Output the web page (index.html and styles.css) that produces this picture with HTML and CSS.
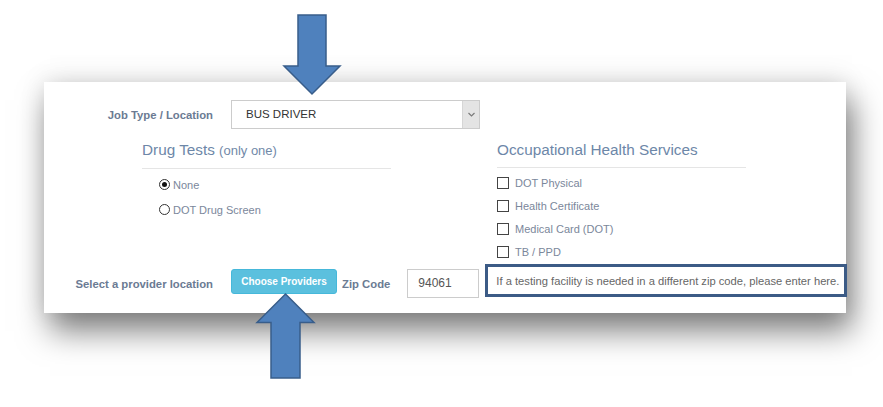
FILE: index.html
```html
<!DOCTYPE html>
<html lang="en">
<head>
<meta charset="utf-8">
<title>Job Type / Location</title>
<link rel="stylesheet" href="styles.css">
</head>
<body>
<div class="stage">
  <div class="panel">
    <div class="job-row">
      <label class="field-label">Job Type / Location</label>
      <div class="select">
        <span class="select-value">BUS DRIVER</span>
        <span class="select-arrow"><svg width="7" height="5" viewBox="0 0 7 5"><path d="M0.5 1 L3.5 4 L6.5 1" fill="none" stroke="#7a7a7a" stroke-width="1.2"/></svg></span>
      </div>
    </div>
    <div class="columns">
      <section class="group drug">
        <h3 class="group-title">Drug Tests <small>(only one)</small></h3>
        <ul class="options radios">
          <li><span class="radio checked"></span>None</li>
          <li><span class="radio"></span>DOT Drug Screen</li>
        </ul>
      </section>
      <section class="group ohs">
        <h3 class="group-title">Occupational Health Services</h3>
        <ul class="options checks">
          <li><span class="check"></span>DOT Physical</li>
          <li><span class="check"></span>Health Certificate</li>
          <li><span class="check"></span>Medical Card (DOT)</li>
          <li><span class="check"></span>TB / PPD</li>
        </ul>
      </section>
    </div>
    <div class="provider-row">
      <label class="field-label provider-label">Select a provider location</label>
      <button class="btn-info">Choose Providers</button>
      <span class="zip-label">Zip Code</span>
      <div class="zip-input">94061</div>
      <div class="callout">If a testing facility is needed in a different zip code, please enter here.</div>
    </div>
  </div>
  <svg class="annotations" width="883" height="407" viewBox="0 0 883 407">
    <polygon points="298,15 326,15 326,66 340,66 312,94 284,66 298,66" fill="#4f81bd" stroke="#385d8a" stroke-width="1.5"/>
    <polygon points="285.5,294 314,322.5 300,322.5 300,378 271,378 271,322.5 257,322.5" fill="#4f81bd" stroke="#385d8a" stroke-width="1.5"/>
  </svg>
</div>
</body>
</html>
```

FILE: styles.css
```css
html, body {
  margin: 0;
  padding: 0;
  background: #ffffff;
  overflow: hidden;
}

body {
  font-family: "Liberation Sans", Arial, sans-serif;
}

.stage {
  position: relative;
  width: 883px;
  height: 407px;
  box-sizing: border-box;
  padding: 82px 0 0 44px;
}

.panel {
  width: 802px;
  height: 231px;
  box-sizing: border-box;
  background: #ffffff;
  padding-top: 18px;
  box-shadow: 0 -3px 24px rgba(0, 0, 0, 0.10), 6px 18px 30px rgba(0, 0, 0, 0.50);
}

.job-row {
  display: flex;
  align-items: center;
}

.field-label {
  width: 169px;
  flex: none;
  text-align: right;
  font-weight: bold;
  font-size: 11.3px;
  color: #6b7b93;
}

.select {
  margin-left: 18px;
  width: 249px;
  height: 29px;
  box-sizing: border-box;
  border: 1px solid #cccccc;
  display: flex;
  background: #ffffff;
}

.select-value {
  flex: 1;
  padding-left: 14px;
  font-size: 11.5px;
  line-height: 27px;
  color: #333333;
}

.select-arrow {
  width: 16px;
  background: #e4e4e4;
  border-left: 1px solid #d6d6d6;
  display: flex;
  align-items: center;
  justify-content: center;
}

.columns {
  display: flex;
  margin-top: 11px;
}

.group {
  width: 249px;
  flex: none;
}

.drug {
  margin-left: 98px;
}

.ohs {
  margin-left: 106px;
}

.group-title {
  margin: 0;
  font-weight: normal;
  font-size: 15.3px;
  line-height: 20px;
  padding-bottom: 7px;
  border-bottom: 1px solid #e5e5e5;
  color: #6d87a8;
}

.group-title small {
  font-size: 13px;
  color: #7189a8;
}

.options {
  list-style: none;
  margin: 0;
  font-size: 11px;
  color: #7b879b;
}

.options li {
  display: flex;
  align-items: center;
}

.radios {
  padding: 3px 0 0 17px;
}

.radios li {
  height: 25px;
}

.checks {
  padding: 3px 0 0 0;
}

.checks li {
  height: 23px;
}

.radio {
  width: 11px;
  height: 11px;
  box-sizing: border-box;
  border: 1px solid #333333;
  border-radius: 50%;
  margin-right: 3px;
  display: flex;
  align-items: center;
  justify-content: center;
  background: #ffffff;
}

.radio.checked::after {
  content: "";
  width: 5px;
  height: 5px;
  border-radius: 50%;
  background: #111111;
}

.check {
  width: 12px;
  height: 12px;
  box-sizing: border-box;
  border: 1px solid #444444;
  margin-right: 6px;
  background: #ffffff;
}

.provider-row {
  display: flex;
  align-items: flex-start;
  height: 34px;
}

.provider-label {
  margin-top: 14px;
  line-height: 14px;
}

.btn-info {
  flex: none;
  margin: 6px 0 0 18px;
  width: 106px;
  height: 25px;
  padding: 0;
  border: 1px solid #46b8da;
  border-radius: 3px;
  background: #5bc0de;
  color: #ffffff;
  font-family: "Liberation Sans", Arial, sans-serif;
  font-weight: bold;
  font-size: 10px;
}

.zip-label {
  flex: none;
  white-space: nowrap;
  margin: 14px 0 0 5px;
  line-height: 14px;
  font-weight: bold;
  font-size: 11.3px;
  color: #6b7b93;
}

.zip-input {
  flex: none;
  margin: 6px 0 0 17px;
  width: 72px;
  height: 29px;
  box-sizing: border-box;
  border: 1px solid #cccccc;
  padding-left: 10px;
  font-size: 12px;
  line-height: 27px;
  color: #555555;
}

.callout {
  margin: 1px 0 0 6px;
  width: 362px;
  height: 33px;
  flex: none;
  box-sizing: border-box;
  border: 3px solid #3c5b86;
  padding-left: 8px;
  display: flex;
  align-items: center;
  white-space: nowrap;
  font-size: 11.2px;
  color: #666666;
  background: #ffffff;
}

.annotations {
  position: absolute;
  left: 0;
  top: 0;
  pointer-events: none;
}
```
